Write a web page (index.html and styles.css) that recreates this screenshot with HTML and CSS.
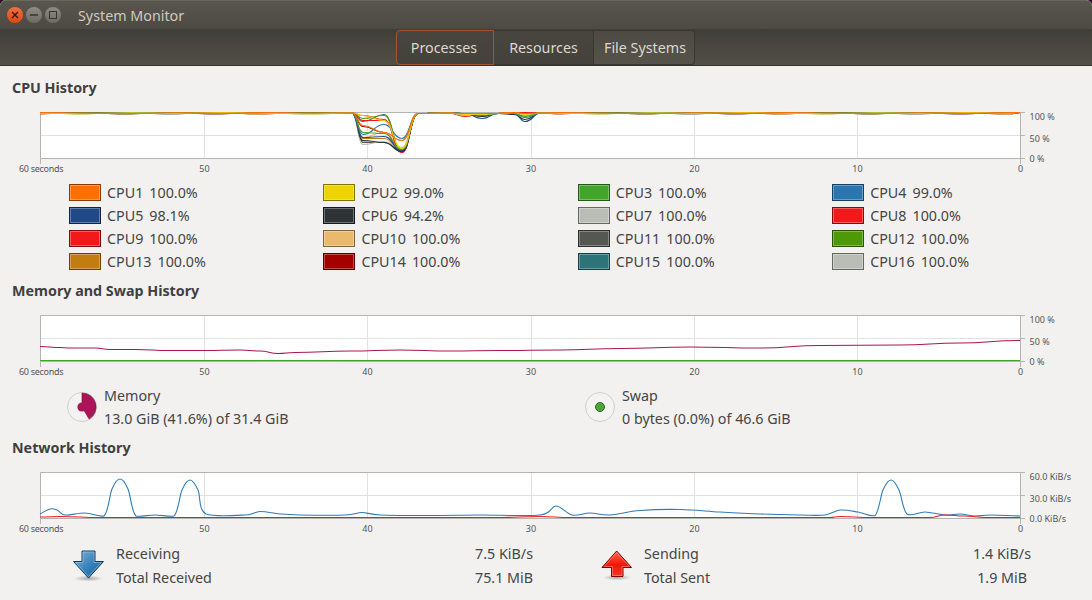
FILE: index.html
```html
<!DOCTYPE html>
<html lang="en">

<head>
    <meta charset="utf-8">
    <meta name="viewport" content="width=device-width, initial-scale=1.0">
    <title>System Monitor</title>
    <link rel="stylesheet" href="styles.css">
</head>

<body>
    <div class="window">
        <header class="titlebar">
            <div class="win-buttons">
                <span class="win-btn close">
                    <svg width="16" height="16" viewBox="0 0 16 16"><path d="M5 5l6 6M11 5l-6 6" stroke="#3a1206" stroke-width="1.2" fill="none"/></svg>
                </span>
                <span class="win-btn">
                    <svg width="16" height="16" viewBox="0 0 16 16"><path d="M4 8h8" stroke="#35342f" stroke-width="1.4" fill="none"/></svg>
                </span>
                <span class="win-btn">
                    <svg width="16" height="16" viewBox="0 0 16 16"><rect x="4.5" y="4.5" width="7" height="7" stroke="#35342f" fill="none"/></svg>
                </span>
            </div>
            <span class="title">System Monitor</span>
        </header>

        <nav class="toolbar">
            <div class="tabs">
                <button class="tab active">Processes</button>
                <button class="tab">Resources</button>
                <button class="tab light">File Systems</button>
            </div>
        </nav>

        <main class="content">
            <section class="section first">
                <h2>CPU History</h2>
                <svg class="graph" viewBox="0 104 1092 72" width="1092" height="72">
                    <rect class="plot" x="40.5" y="112.5" width="980" height="46"/>
                    <path class="grid" d="M204.5 112v46M367.5 112v46M531.5 112v46M694.5 112v46M857.5 112v46M40 135.5h980"/>
                    <path class="frame" d="M40.5 164V158.5H1020.5V112.5H40.5V158.5M1020.5 158.5V164M1020 112.5h5M1020 135.5h5M1020 158.5h5"/>
                    <g id="cpu-lines"></g>
                    <text class="tick secs" x="19" y="172">60 seconds</text>
                    <text class="tick mid" x="204.5" y="172">50</text>
                    <text class="tick mid" x="367.5" y="172">40</text>
                    <text class="tick mid" x="531" y="172">30</text>
                    <text class="tick mid" x="694.5" y="172">20</text>
                    <text class="tick mid" x="857.5" y="172">10</text>
                    <text class="tick mid" x="1020.5" y="172">0</text>
                    <text class="tick" x="1029.5" y="120">100 %</text>
                    <text class="tick" x="1029.5" y="142">50 %</text>
                    <text class="tick" x="1029.5" y="162">0 %</text>
                </svg>
                <div class="legend">
                    <div class="cpu"><span class="swatch" style="--c:#ff6e00;--b:#8a3c00"></span><span>CPU1</span><span class="pct">100.0%</span></div>
                    <div class="cpu"><span class="swatch" style="--c:#edd400;--b:#817300"></span><span>CPU2</span><span class="pct">99.0%</span></div>
                    <div class="cpu"><span class="swatch" style="--c:#43a42c;--b:#245a18"></span><span>CPU3</span><span class="pct">100.0%</span></div>
                    <div class="cpu"><span class="swatch" style="--c:#2c76b0;--b:#184060"></span><span>CPU4</span><span class="pct">99.0%</span></div>
                    <div class="cpu"><span class="swatch" style="--c:#1f4a87;--b:#0f2545"></span><span>CPU5</span><span class="pct">98.1%</span></div>
                    <div class="cpu"><span class="swatch" style="--c:#2e3436;--b:#17191a"></span><span>CPU6</span><span class="pct">94.2%</span></div>
                    <div class="cpu"><span class="swatch" style="--c:#babdb6;--b:#656762"></span><span>CPU7</span><span class="pct">100.0%</span></div>
                    <div class="cpu"><span class="swatch" style="--c:#f11919;--b:#830d0d"></span><span>CPU8</span><span class="pct">100.0%</span></div>
                    <div class="cpu"><span class="swatch" style="--c:#f11919;--b:#830d0d"></span><span>CPU9</span><span class="pct">100.0%</span></div>
                    <div class="cpu"><span class="swatch" style="--c:#e9b96e;--b:#7f653c"></span><span>CPU10</span><span class="pct">100.0%</span></div>
                    <div class="cpu"><span class="swatch" style="--c:#555753;--b:#2e2f2d"></span><span>CPU11</span><span class="pct">100.0%</span></div>
                    <div class="cpu"><span class="swatch" style="--c:#4e9a06;--b:#2a5403"></span><span>CPU12</span><span class="pct">100.0%</span></div>
                    <div class="cpu"><span class="swatch" style="--c:#c17d11;--b:#694409"></span><span>CPU13</span><span class="pct">100.0%</span></div>
                    <div class="cpu"><span class="swatch" style="--c:#a40000;--b:#590000"></span><span>CPU14</span><span class="pct">100.0%</span></div>
                    <div class="cpu"><span class="swatch" style="--c:#2d7478;--b:#183f41"></span><span>CPU15</span><span class="pct">100.0%</span></div>
                    <div class="cpu"><span class="swatch" style="--c:#babdb6;--b:#656762"></span><span>CPU16</span><span class="pct">100.0%</span></div>
                </div>
            </section>

            <section class="section">
                <h2>Memory and Swap History</h2>
                <svg class="graph" viewBox="0 307 1092 72" width="1092" height="72">
                    <rect class="plot" x="40.5" y="315.5" width="980" height="46"/>
                    <path class="grid" d="M204.5 315v46M367.5 315v46M531.5 315v46M694.5 315v46M857.5 315v46M40 338.5h980"/>
                    <path class="frame" d="M40.5 367V361.5H1020.5V315.5H40.5V361.5M1020.5 361.5V367M1020 315.5h5M1020 338.5h5M1020 361.5h5"/>
                    <g id="mem-lines"></g>
                    <text class="tick secs" x="19" y="375">60 seconds</text>
                    <text class="tick mid" x="204.5" y="375">50</text>
                    <text class="tick mid" x="367.5" y="375">40</text>
                    <text class="tick mid" x="531" y="375">30</text>
                    <text class="tick mid" x="694.5" y="375">20</text>
                    <text class="tick mid" x="857.5" y="375">10</text>
                    <text class="tick mid" x="1020.5" y="375">0</text>
                    <text class="tick" x="1029.5" y="323">100 %</text>
                    <text class="tick" x="1029.5" y="345">50 %</text>
                    <text class="tick" x="1029.5" y="365">0 %</text>
                </svg>
                <div class="usage">
                    <div class="usage-item">
                        <svg width="30" height="30" viewBox="0 0 30 30">
                            <circle cx="15" cy="15" r="14.5" fill="#f4f3f2" stroke="#cfcdca"/>
                            <path d="M15 15V1A14 14 0 0 1 22.1 27.1Z" fill="#ad1457" stroke="#6d0d37" stroke-width=".6"/>
                            <circle cx="15" cy="15" r="4.6" fill="#ad1457"/>
                        </svg>
                        <div class="usage-text">
                            <div>Memory</div>
                            <div>13.0 GiB (41.6%) of 31.4 GiB</div>
                        </div>
                    </div>
                    <div class="usage-item">
                        <svg width="30" height="30" viewBox="0 0 30 30">
                            <circle cx="15" cy="15" r="14.5" fill="#f4f3f2" stroke="#cfcdca"/>
                            <circle cx="15" cy="15" r="4.5" fill="#4ea63a" stroke="#2b6b1e"/>
                        </svg>
                        <div class="usage-text">
                            <div>Swap</div>
                            <div>0 bytes (0.0%) of 46.6 GiB</div>
                        </div>
                    </div>
                </div>
            </section>

            <section class="section">
                <h2>Network History</h2>
                <svg class="graph" viewBox="0 464 1092 72" width="1092" height="72">
                    <rect class="plot" x="40.5" y="472.5" width="980" height="46"/>
                    <path class="grid" d="M204.5 472v46M367.5 472v46M531.5 472v46M694.5 472v46M857.5 472v46M40 495.5h980"/>
                    <path class="frame" d="M40.5 524V518.5H1020.5V472.5H40.5V518.5M1020.5 518.5V524M1020 472.5h5M1020 495.5h5M1020 518.5h5"/>
                    <g id="net-lines"></g>
                    <text class="tick secs" x="19" y="532">60 seconds</text>
                    <text class="tick mid" x="204.5" y="532">50</text>
                    <text class="tick mid" x="367.5" y="532">40</text>
                    <text class="tick mid" x="531" y="532">30</text>
                    <text class="tick mid" x="694.5" y="532">20</text>
                    <text class="tick mid" x="857.5" y="532">10</text>
                    <text class="tick mid" x="1020.5" y="532">0</text>
                    <text class="tick" x="1029.5" y="480">60.0 KiB/s</text>
                    <text class="tick" x="1029.5" y="502">30.0 KiB/s</text>
                    <text class="tick" x="1029.5" y="522">0.0 KiB/s</text>
                </svg>
                <div class="net">
                    <div class="net-item rx">
                        <svg class="arrow" width="32" height="34" viewBox="0 0 32 34">
                            <defs>
                                <linearGradient id="blue" x1="0" y1="0" x2="1" y2="1">
                                    <stop offset="0" stop-color="#7fb4dc"/>
                                    <stop offset=".6" stop-color="#2f7cb6"/>
                                    <stop offset="1" stop-color="#2a6ea6"/>
                                </linearGradient>
                                <radialGradient id="shadow">
                                    <stop offset="0" stop-color="#000" stop-opacity=".3"/>
                                    <stop offset="1" stop-color="#000" stop-opacity="0"/>
                                </radialGradient>
                            </defs>
                            <ellipse cx="15.5" cy="30.5" rx="15" ry="3" fill="url(#shadow)"/>
                            <path d="M9 3H22V13.5H30.5L15.5 30L.5 13.5H9Z" fill="url(#blue)" stroke="#123a5c" stroke-linejoin="round"/>
                            <path d="M10 4H21V14.5H28.2L15.5 28.5L2.8 14.5H10Z" fill="none" stroke="#fff" stroke-opacity=".3"/>
                        </svg>
                        <div class="net-rows">
                            <div><span>Receiving</span><span>7.5 KiB/s</span></div>
                            <div><span>Total Received</span><span>75.1 MiB</span></div>
                        </div>
                    </div>
                    <div class="net-item tx">
                        <svg class="arrow" width="32" height="34" viewBox="0 0 32 34">
                            <defs>
                                <linearGradient id="red" x1="0" y1="0" x2="0" y2="1">
                                    <stop offset="0" stop-color="#ff6a4a"/>
                                    <stop offset=".55" stop-color="#f01408"/>
                                    <stop offset="1" stop-color="#f63a20"/>
                                </linearGradient>
                            </defs>
                            <ellipse cx="16" cy="29.5" rx="14" ry="3" fill="url(#shadow)"/>
                            <path d="M10.5 28.5H22V19.5H30.5L15.7 3L1 19.5H10.5Z" fill="url(#red)" stroke="#7c0000" stroke-linejoin="round"/>
                            <path d="M11.5 27.5H21V18.5H28.3L15.7 4.5L3.2 18.5H11.5Z" fill="none" stroke="#fff" stroke-opacity=".3"/>
                        </svg>
                        <div class="net-rows">
                            <div><span>Sending</span><span>1.4 KiB/s</span></div>
                            <div><span>Total Sent</span><span class="short">1.9 MiB</span></div>
                        </div>
                    </div>
                </div>
            </section>
        </main>
    </div>
    <script src="script.js"></script>
</body>

</html>
```

FILE: styles.css
```css
*,
*::after,
*::before {
    margin: 0;
    padding: 0;
    box-sizing: border-box;
}

html,
body {
    height: 600px;
    overflow: hidden;
    background-color: #2c0a22;
}

body {
    font-family: 'Noto Sans', sans-serif;
    font-size: 14.3px;
    color: #454545;
}

.window {
    width: 1092px;
    height: 600px;
    border-radius: 6px 6px 0 0;
    overflow: hidden;
    background-color: #f2f1f0;
}

.titlebar {
    display: flex;
    align-items: center;
    height: 29px;
    background: linear-gradient(#59564e, #4c4a43);
    border-top: 1px solid #6a675e;
}

.win-buttons {
    display: flex;
    gap: 3px;
    padding-left: 7px;
}

.win-btn {
    display: block;
    width: 16px;
    height: 16px;
    border-radius: 50%;
    background: linear-gradient(#8d8b83, #6c6a62);
}

.win-btn.close {
    background: linear-gradient(#f0713f, #dd4814);
}

.win-btn svg {
    display: block;
}

.title {
    margin-left: 17px;
    color: #cfcabf;
    font-size: 14.3px;
}

.toolbar {
    display: flex;
    justify-content: center;
    height: 37px;
    padding-top: 1px;
    background: linear-gradient(#403e38, #524f46);
    border-bottom: 1px solid #35332e;
}

.tabs {
    display: flex;
    height: 35px;
    margin-right: 1px;
}

.tab {
    font: inherit;
    width: 100px;
    color: #dcd8d0;
    background: linear-gradient(#47453e, #44423b);
    border: 1px solid #393732;
    border-left: 0;
}

.tab.active {
    width: 98px;
    padding-right: 2px;
    border: 1px solid #a3552f;
    border-radius: 4px 0 0 4px;
}

.tab.light {
    width: 101px;
    padding-left: 2px;
    background: linear-gradient(#4c4a43, #56534a);
    border-radius: 0 4px 4px 0;
}

.section {
    padding-top: 8px;
}

.section.first {
    padding-top: 12px;
}

h2 {
    height: 20px;
    padding-left: 12px;
    font-size: 14.3px;
    line-height: 20px;
    font-weight: 700;
    color: #3f3f3f;
}

.graph {
    display: block;
    margin-top: 6px;
}

.plot {
    fill: #fff;
}

.grid {
    fill: none;
    stroke: #e2e2e2;
}

.frame {
    fill: none;
    stroke: #b4b4b2;
}

.tick {
    font-size: 9px;
    fill: #555;
}

.tick.mid {
    text-anchor: middle;
}

.tick.secs {
    letter-spacing: -.3px;
}

.line {
    fill: none;
    stroke-width: 1.1;
}

.legend {
    display: grid;
    grid-template-columns: repeat(4, 254.4px);
    grid-auto-rows: 23px;
    margin-top: 5px;
    padding-left: 69px;
}

.cpu {
    display: flex;
    align-items: center;
    gap: 7px;
}

.pct {
    margin-left: -1px;
}

.swatch {
    width: 32px;
    height: 17px;
    margin-right: -1px;
    background-color: var(--c);
    border: 1px solid var(--b);
    box-shadow: inset 0 0 0 1px rgba(255, 255, 255, .3);
}

.usage {
    display: grid;
    grid-template-columns: 518px 1fr;
    margin-top: 5px;
    padding-left: 67px;
}

.usage-item {
    display: flex;
    align-items: center;
    gap: 7px;
}

.usage-item svg {
    display: block;
}

.usage-text div {
    height: 23px;
    line-height: 23px;
}

.net {
    display: grid;
    grid-template-columns: 528px 430px;
    margin-top: 6px;
    padding-left: 73px;
}

.net-item {
    display: flex;
    align-items: flex-start;
}

.arrow {
    display: block;
    margin: 6px 11px 0 0;
}

.net-rows {
    flex: 1;
}

.net-rows div {
    display: flex;
    justify-content: space-between;
    height: 24px;
    line-height: 24px;
}

.rx .net-rows {
    padding-right: 68px;
}

.short {
    padding-right: 4px;
}
```

FILE: script.js
```js
// cpu and memory samples are joined the way the monitor draws them
const curve = pts => {
    let d = `M${pts[0][0]} ${pts[0][1]}`;
    for (let i = 1; i < pts.length; i++) {
        const [x0, y0] = pts[i - 1];
        const [x1, y1] = pts[i];
        const mid = (x0 + x1) / 2;
        d += `C${mid} ${y0} ${mid} ${y1} ${x1} ${y1}`;
    }
    return d;
};

// rounder version for the network peaks
const smooth = pts => {
    let d = `M${pts[0][0]} ${pts[0][1]}`;
    for (let i = 0; i < pts.length - 1; i++) {
        const p0 = pts[i - 1] || pts[i];
        const p1 = pts[i];
        const p2 = pts[i + 1];
        const p3 = pts[i + 2] || p2;
        const c1y = Math.min(p1[1] + (p2[1] - p0[1]) / 6, 517);
        const c2y = Math.min(p2[1] - (p3[1] - p1[1]) / 6, 517);
        d += `C${p1[0] + (p2[0] - p0[0]) / 6} ${c1y} ${p2[0] - (p3[0] - p1[0]) / 6} ${c2y} ${p2[0]} ${p2[1]}`;
    }
    return d;
};

const addLine = (group, d, color, width) => {
    const el = document.createElementNS('http://www.w3.org/2000/svg', 'path');
    el.setAttribute('d', d);
    el.setAttribute('class', 'line');
    el.setAttribute('stroke', color);
    if (width) el.setAttribute('stroke-width', width);
    document.getElementById(group).appendChild(el);
};

// depth below 100% at the samples: 363 384 402 | 465 482 | 514 525
const cpus = [
    ['#ff6e00', 13, 20, 28, 1, 1, 0, 1],
    ['#edd400', 3, 8, 36, 2, 2, 0, 2],
    ['#43a42c', 20, 21, 37, 1, 2, 1, 4],
    ['#2c76b0', 22, 12, 26, 1, 3, 1, 5],
    ['#1f4a87', 25, 24, 38, 1, 6, 1, 9],
    ['#2e3436', 28, 30, 39, 1, 4, 2, 7],
    ['#babdb6', 32, 29, 36, 3, 2, 1, 2],
    ['#f11919', 3, 7, 40, 3, 1, 0, 1],
    ['#f11919', 8, 8, 39, 4, 1, 0, 0],
    ['#e9b96e', 25, 20, 35, 2, 3, 1, 3],
    ['#555753', 30, 30, 38, 2, 2, 1, 3],
    ['#4e9a06', 6, 3, 38, 1, 1, 0, 1],
    ['#c17d11', 26, 26, 38, 2, 2, 1, 3],
    ['#a40000', 14, 20, 40, 3, 1, 0, 1],
    ['#2d7478', 9, 2, 39, 1, 3, 1, 2],
    ['#babdb6', 29, 30, 37, 2, 1, 1, 1],
];

const TOP = 112.5;
// small jitter so the flat stretches mix their colours
const flat = (from, to, k) => {
    const pts = [];
    for (let x = from, n = 0; x < to; x += 45, n++) {
        pts.push([x, TOP + ((n * 7 + k * 13) % 5) * .3]);
    }
    return pts;
};

cpus.slice().reverse().forEach(([color, a, b, c, d, e, f, g], k) => {
    const pts = [
        ...flat(40, 345, k), [352, TOP + .5],
        [363, TOP + a], [384, TOP + b], [402, TOP + c], [418, TOP + 1],
        [449, TOP + .5], [465, TOP + d], [482, TOP + e], [498, TOP + 1],
        [514, TOP + f], [525, TOP + g], [541, TOP + .5],
        ...flat(560, 1015, k), [1020, TOP],
    ];
    addLine('cpu-lines', curve(pts), color, 1.2);
});

addLine('mem-lines', curve([
    [40, 346.5], [60, 347.5], [70, 348], [95, 348], [110, 349.5], [135, 349.5], [170, 350.5], [205, 350.5],
    [240, 350], [260, 351], [278, 353.5], [295, 352.5], [350, 351], [400, 350], [450, 351], [500, 350.5],
    [560, 350], [620, 348.5], [690, 347], [760, 348], [820, 345.5], [900, 345], [960, 343], [1020, 340.5],
]), '#ad1457');
addLine('mem-lines', curve([[40, 360.5], [1020, 360.5]]), '#43a42c', 1.5);

addLine('net-lines', smooth([
    [40, 514], [50, 509], [57, 510], [65, 515], [85, 513], [104, 516], [112, 489], [120, 479], [128, 489], [136, 516], [155, 515],
    [174, 516], [182, 490], [190, 480], [198, 490], [206, 514], [245, 515], [260, 511.5], [280, 514], [300, 515], [345, 515],
    [362, 512.5], [380, 515], [430, 515.5], [480, 515], [540, 515], [556, 506], [572, 515], [590, 513],
    [610, 515], [640, 510.5], [680, 509.5], [720, 512], [760, 514], [800, 515], [825, 515], [840, 510],
    [858, 512], [875, 515.5], [883, 490], [891, 480], [899, 490], [907, 514], [925, 512], [945, 515], [960, 514], [975, 516],
    [990, 515], [1020, 516],
]), '#2f7cb6');
addLine('net-lines', curve([
    [40, 517], [60, 516.5], [100, 517.5], [180, 517.5], [300, 517.5], [500, 517.5], [540, 516.5], [570, 517.5],
    [830, 517.5], [840, 516.5], [870, 517.5], [930, 517.5], [945, 515], [965, 516], [985, 517.5], [1020, 517.5],
]), '#f11919', 1.5);
```
